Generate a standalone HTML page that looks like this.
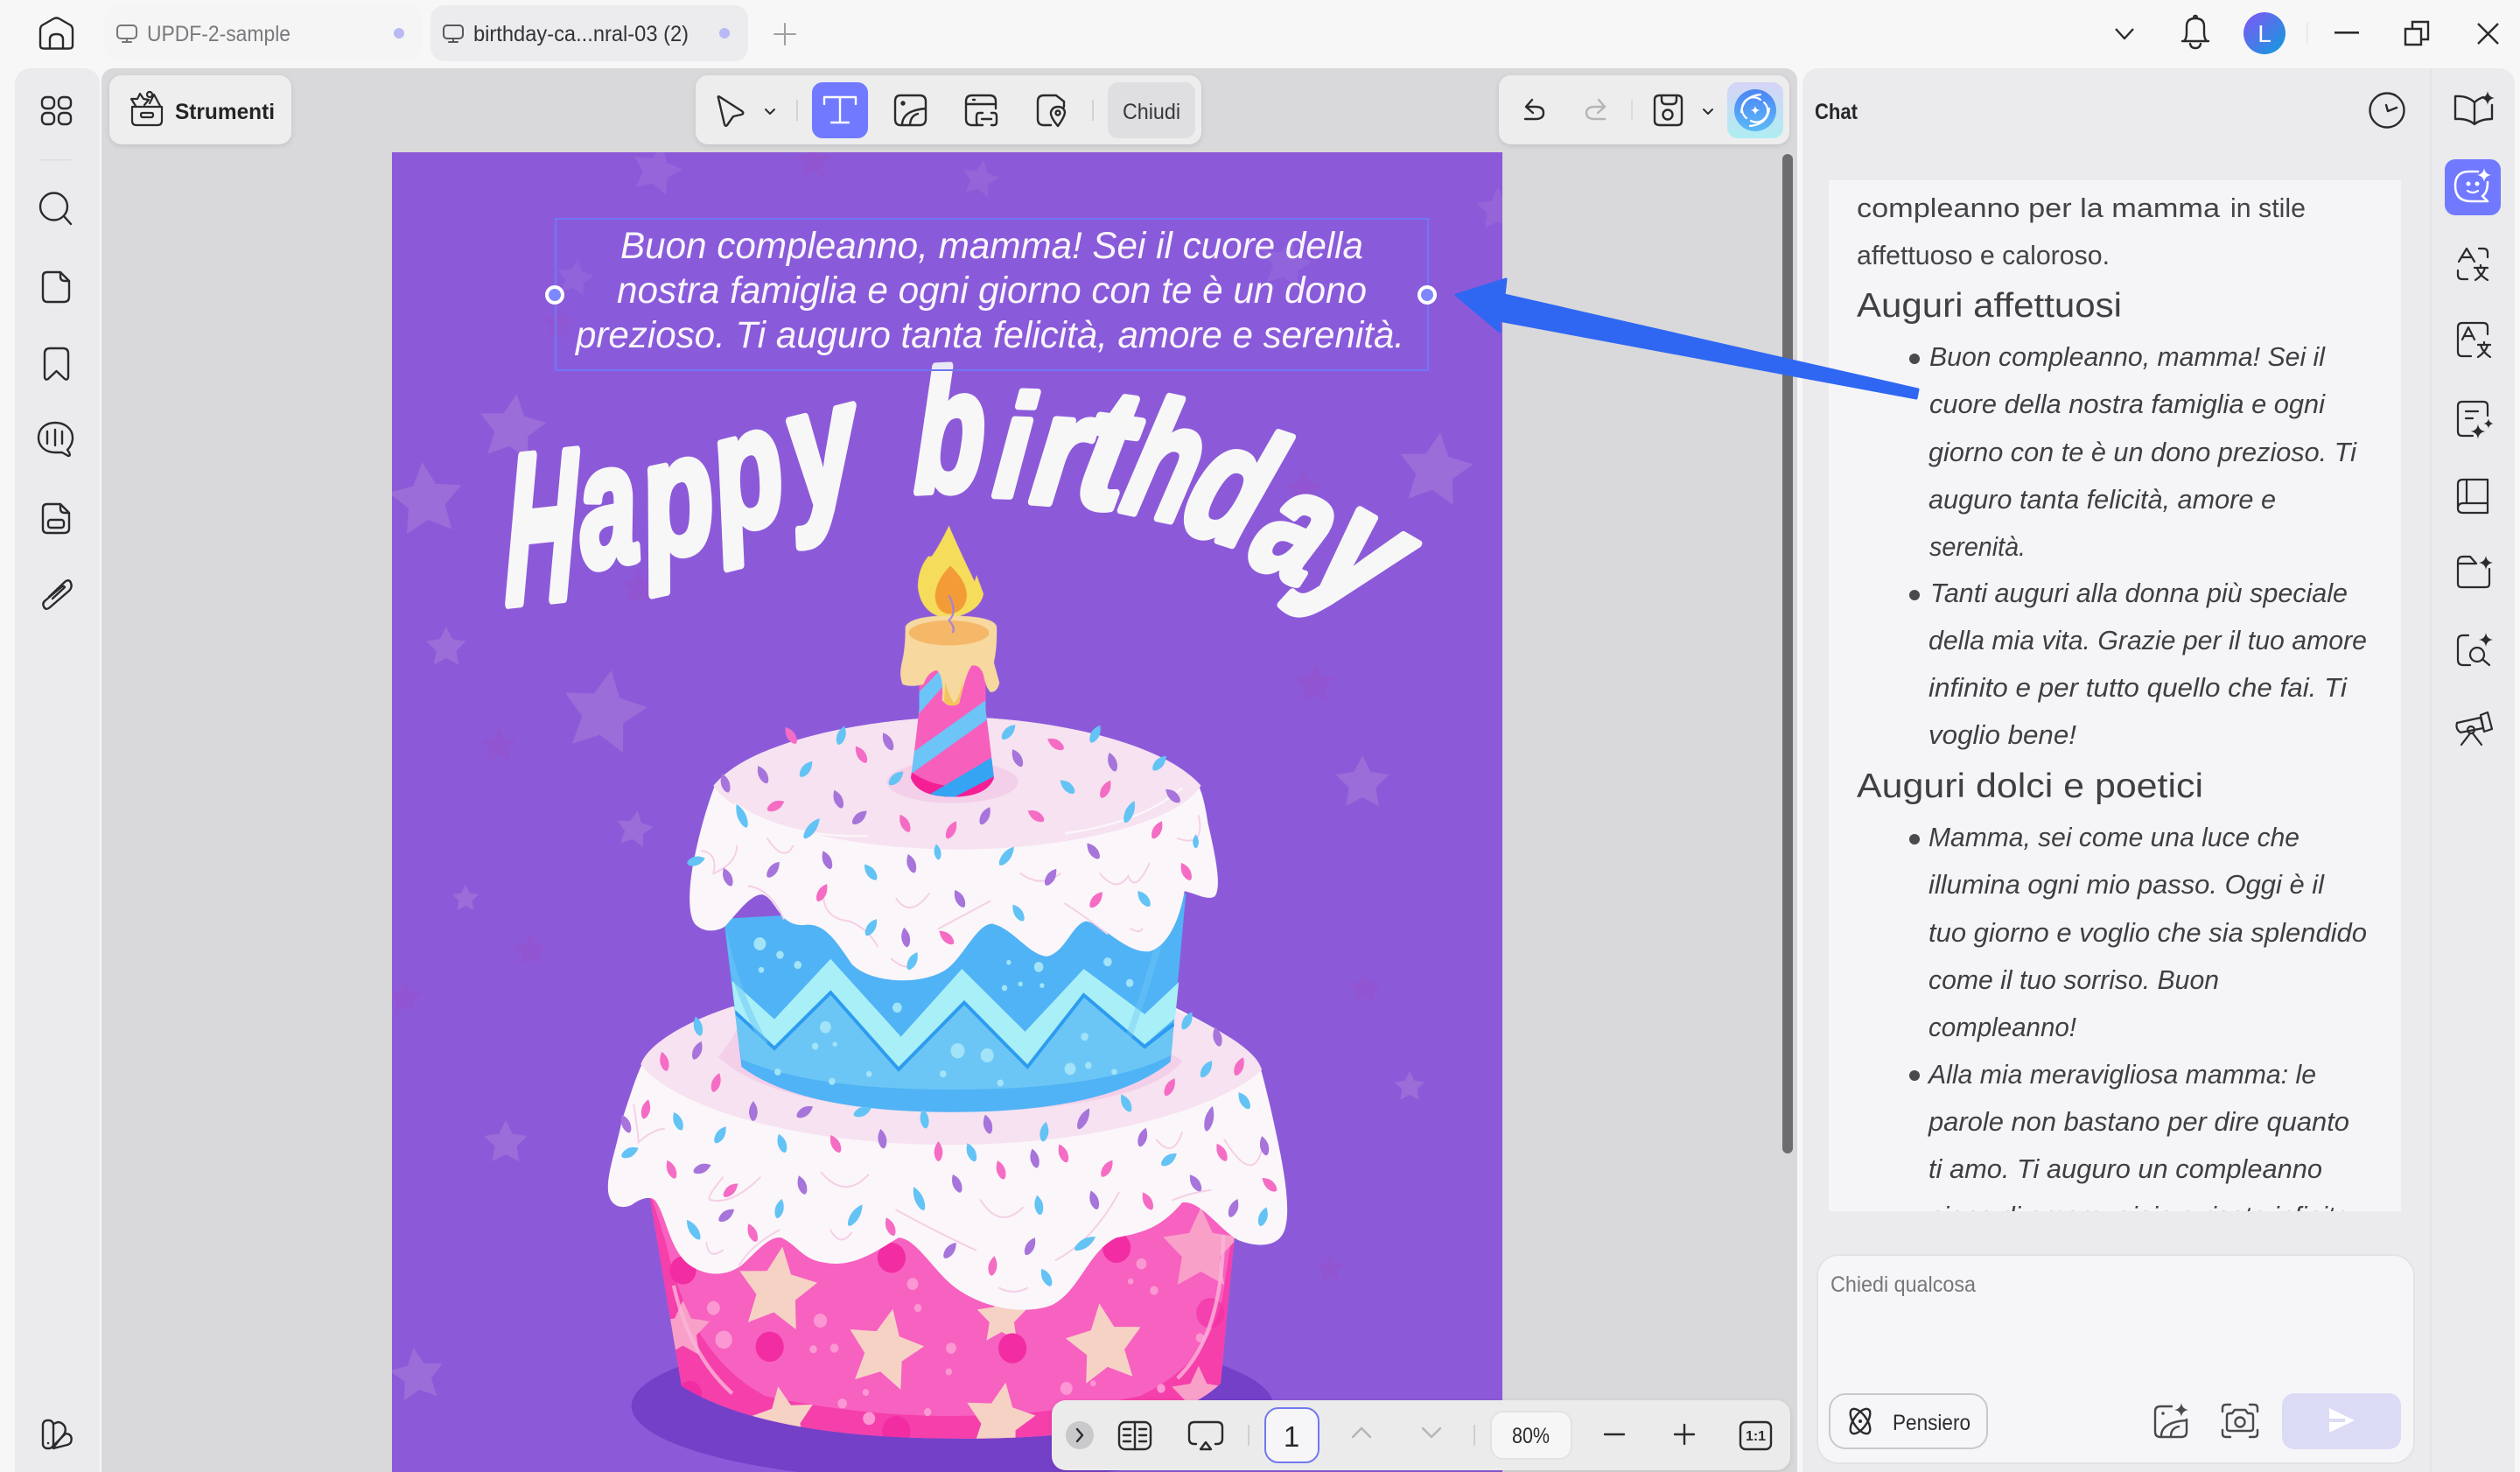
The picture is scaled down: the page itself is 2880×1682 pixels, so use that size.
<!DOCTYPE html>
<html lang="it"><head><meta charset="utf-8"><title>UPDF</title>
<style>
html,body{margin:0;padding:0;background:#f7f7f8;width:2880px;height:1682px;overflow:hidden}
svg{display:block}
text{font-family:"Liberation Sans",sans-serif}
.i{fill:none;stroke:#2b2b2d;stroke-width:2.4;stroke-linecap:round;stroke-linejoin:round}
.c{fill:#444347;font-size:31px}
.e{fill:#3f3e42;font-size:31px;font-style:italic}
.h{fill:#403f43;font-size:39px}
.l{fill:#f7f7f8;font:italic 700 100px "Liberation Sans",sans-serif;stroke:#f7f7f8;stroke-width:5;stroke-linejoin:round}
.m{fill:#faf5fb;font-size:43px;font-style:italic}
</style></head><body>
<svg xmlns="http://www.w3.org/2000/svg" width="2880" height="1682" viewBox="0 0 2880 1682">
<defs>
<polygon id="st" points="0,-1 .294,-.405 .951,-.309 .476,.155 .588,.809 0,.5 -.588,.809 -.476,.155 -.951,-.309 -.294,-.405"/>
<path id="sp" d="M0-8Q1-1 8 0Q1 1 0 8Q-1 1-8 0Q-1-1 0-8Z"/>
<path id="d" d="M0-20Q10-8 9 4Q7 18 0 20Q-7 18-9 4Q-10-8 0-20Z"/>
<clipPath id="pg"><rect x="448" y="174" width="1269" height="1508"/></clipPath>
<clipPath id="ct"><rect x="2090" y="206" width="654" height="1178"/></clipPath>
<clipPath id="tier"><path d="M150 1000L222 1400Q400 1505 820 1505Q1250 1505 1372 1395L1412 1000Z"/></clipPath>
<clipPath id="blue"><path d="M305 400L350 765Q480 855 800 855Q1130 855 1265 755L1305 400Z"/></clipPath>
<clipPath id="cand"><path d="M772 1000H868V1150Q876 1290 880 1370Q870 1430 820 1430Q770 1430 760 1370Q765 1290 772 1150Z"/></clipPath>
<linearGradient id="av" x1="0" y1="0" x2="1" y2="1"><stop offset="0" stop-color="#8455f5"/><stop offset="1" stop-color="#0c9edc"/></linearGradient>
<linearGradient id="ai" x1="0" y1="0" x2="0" y2="1"><stop offset="0" stop-color="#d6d4f6"/><stop offset="1" stop-color="#aeedf2"/></linearGradient>
<linearGradient id="aib" x1="0" y1="0" x2="0" y2="1"><stop offset="0" stop-color="#4d84f5"/><stop offset="1" stop-color="#5cb9f6"/></linearGradient>
<filter id="sh" x="-5%" y="-15%" width="110%" height="130%"><feDropShadow dx="0" dy="2" stdDeviation="3" flood-color="#000" flood-opacity=".1"/></filter>
</defs>

<rect width="2880" height="1682" fill="#f7f7f8"/>

<!-- Tabs -->
<rect x="120" y="5" width="362" height="65" rx="16" fill="#f5f5f6"/>
<rect x="492" y="6" width="363" height="64" rx="16" fill="#ecebed"/>
<path class="i" d="M46 52V34Q46 31 48 29L61 21.5Q64.5 19.5 68 21.5L81 29Q83 31 83 34V52Q83 55.5 79 55.5H50Q46 55.5 46 52ZM57 55V45Q57 39 64.5 39Q72 39 72 45V55"/>
<g class="i" style="stroke:#777779;stroke-width:2"><rect x="134" y="29" width="22" height="15" rx="4"/><path d="M145 44V48M140 48H150"/></g>
<text x="168" y="47" font-size="25" fill="#7a7a7d" textLength="164" lengthAdjust="spacingAndGlyphs">UPDF-2-sample</text>
<circle cx="456" cy="38" r="6" fill="#b9b9f5"/>
<g class="i" style="stroke:#58585a;stroke-width:2"><rect x="507" y="29" width="22" height="15" rx="4"/><path d="M518 44V48M513 48H523"/></g>
<text x="541" y="47" font-size="25" fill="#333335" textLength="246" lengthAdjust="spacingAndGlyphs">birthday-ca...nral-03 (2)</text>
<circle cx="828" cy="38" r="6" fill="#b9b9f5"/>
<path class="i" style="stroke:#a0a0a2;stroke-width:2" d="M897 27V51M885 39H909"/>

<!-- Title bar right -->
<path class="i" style="stroke-linecap:butt" d="M2418 33L2428 44L2438 33"/>
<path class="i" d="M2496 47Q2499 44 2499 38V30Q2499 21 2509 21Q2519 21 2519 30V38Q2519 44 2522 47ZM2494 47H2524M2503 50Q2504 55 2509 55Q2514 55 2515 50M2507 21Q2507 18 2509 18Q2511 18 2511 21"/>
<circle cx="2588" cy="38" r="24" fill="url(#av)"/>
<text x="2588" y="48" font-size="28" fill="#fff" text-anchor="middle">L</text>
<rect x="2636" y="26" width="1.5" height="24" fill="#e6e6e8"/>
<rect x="2668" y="36" width="28" height="2.6" fill="#2b2b2d"/>
<path class="i" style="stroke-linecap:butt;stroke-linejoin:miter" d="M2757 32V25H2775V45H2767M2749 33H2767V51H2749Z"/>
<path class="i" style="stroke-linecap:butt" d="M2832 27L2855 50M2855 27L2832 50"/>

<!-- Left rail -->
<rect x="17" y="78" width="97" height="1640" rx="18" fill="#ebebed"/>
<g class="i"><rect x="48" y="111" width="14" height="13" rx="5"/><rect x="67" y="111" width="14" height="13" rx="5"/><rect x="48" y="129" width="14" height="13" rx="5"/><rect x="67" y="129" width="14" height="13" rx="5"/></g>
<rect x="46" y="182" width="35" height="1.5" fill="#dcdcde"/>
<g class="i">
<circle cx="61.5" cy="236" r="15.5"/><path d="M73 247L81 256"/>
<path d="M69 311H54Q49 311 49 316V339Q49 345 54 345H73Q79 345 79 339V321ZM69 311V316Q69 321 74 321H79"/>
<path d="M51 431V404Q51 398 57 398H72Q78 398 78 404V431Q77 435 74 433L64.500 424L55 433Q52 435 51 431Z"/>
<path d="M63 483C52 483 44 490 44 500C44 510 52 517 63 517H71L78 521Q81 521 79 517L77 514C80 511 83 506 83 500C83 490 74 483 63 483ZM54 493V507M63 491V509M71 493V507"/>
<path d="M69 576H54Q49 576 49 581V604Q49 609 54 609H73Q79 609 79 604V586ZM69 576V581Q69 586 74 586H79"/><rect x="55" y="594" width="18" height="9" rx="3"/>
<path d="M56 682L74 665Q79 661 81 666Q83 671 79 675L57 694Q52 698 50 693Q48 689 52 686L71 670Q73 669 74 671L60 684"/>
<rect x="49" y="1623" width="12" height="32" rx="5"/><path d="M61 1627L66 1625Q71 1625 74 1630Q76 1635 73 1639L61 1654M63 1650L75 1638L79 1639Q83 1642 81 1648Q80 1650 77 1651L61 1655"/>
</g>
<circle cx="55" cy="1649" r="1.3" fill="#2b2b2d"/>

<!-- Canvas -->
<rect x="116" y="78" width="1938" height="1640" rx="14" fill="#d9d8da"/>

<!-- Page -->
<g clip-path="url(#pg)">
<rect x="448" y="174" width="1269" height="1508" fill="#8c5ad9"/>
<g fill="#9b6dd8">
<use href="#st" transform="translate(585 490) rotate(8) scale(40)"/><use href="#st" transform="translate(487 572) rotate(-6) scale(44)"/><use href="#st" transform="translate(510 740) scale(24)"/>
<use href="#st" transform="translate(690 815) rotate(10) scale(50)"/><use href="#st" transform="translate(1557 895) scale(32)"/><use href="#st" transform="translate(1640 538) rotate(8) scale(44)"/>
<use href="#st" transform="translate(725 948) rotate(10) scale(22)"/><use href="#st" transform="translate(532 1027) scale(16)"/><use href="#st" transform="translate(750 195) rotate(15) scale(30)" opacity=".6"/>
<use href="#st" transform="translate(1611 1242) scale(18)"/><use href="#st" transform="translate(578 1306) scale(26)"/><use href="#st" transform="translate(477 1572) rotate(-8) scale(32)"/>
<use href="#st" transform="translate(657 318) rotate(10) scale(22)" opacity=".5"/><use href="#st" transform="translate(1470 302) rotate(12) scale(30)" opacity=".5"/><use href="#st" transform="translate(1712 240) scale(26)" opacity=".5"/>
<use href="#st" transform="translate(1120 205) rotate(12) scale(22)" opacity=".5"/>
</g>
<g fill="#9653cd" opacity=".6">
<use href="#st" transform="translate(1503 782) scale(24)"/><use href="#st" transform="translate(570 852) scale(22)"/><use href="#st" transform="translate(730 672) scale(22)"/><use href="#st" transform="translate(606 1086) scale(20)"/>
<use href="#st" transform="translate(930 185) scale(22)"/><use href="#st" transform="translate(463 1140) scale(20)"/><use href="#st" transform="translate(1560 1130) scale(20)"/><use href="#st" transform="translate(1490 560) scale(22)"/><use href="#st" transform="translate(1520 1450) scale(18)"/><use href="#st" transform="translate(640 370) scale(20)"/>
</g>

<!-- Happy birthday (real text, per letter) -->
<text class="l" transform="translate(578 690) rotate(-6) skewX(-6) scale(1.12 2.4)">H</text>
<text class="l" transform="translate(668 650) rotate(-10) skewX(-4) scale(1.2 1.95)">a</text>
<text class="l" transform="translate(742 640) rotate(-12) skewX(-4) scale(1.35 1.9)">p</text>
<text class="l" transform="translate(826 610) rotate(-14) skewX(-4) scale(1.3 1.9)">p</text>
<text class="l" transform="translate(912 585) rotate(-14) skewX(-4) scale(1.4 1.95)">y</text>
<text class="l" transform="translate(1045 562) rotate(-3) skewX(-4) scale(1.3 1.95)">b</text>
<text class="l" transform="translate(1134 566) rotate(2) skewX(-4) scale(1.35 1.65)">i</text>
<text class="l" transform="translate(1176 573) rotate(4) skewX(-4) scale(1.5 1.8)">r</text>
<text class="l" transform="translate(1226 575) rotate(8) skewX(-4) scale(1.6 1.95)">t</text>
<text class="l" transform="translate(1278 582) rotate(12) skewX(-4) scale(1.25 1.9)">h</text>
<text class="l" transform="translate(1345 602) rotate(18) skewX(-4) scale(1.35 1.9)">d</text>
<text class="l" transform="translate(1422 640) rotate(25) skewX(-4) scale(1.3 1.8)">a</text>
<text class="l" transform="translate(1490 662) rotate(30) skewX(-4) scale(1.45 1.9)">y</text>

<!-- Selected text -->
<rect x="635" y="250" width="997" height="173" fill="#7a6cf0" fill-opacity=".1" stroke="#6f78f5" stroke-width="2"/>
<text class="m" x="709" y="295" textLength="849" lengthAdjust="spacingAndGlyphs">Buon compleanno, mamma! Sei il cuore della</text>
<text class="m" x="705" y="346" textLength="857" lengthAdjust="spacingAndGlyphs">nostra famiglia e ogni giorno con te è un dono</text>
<text class="m" x="658" y="397" textLength="947" lengthAdjust="spacingAndGlyphs">prezioso. Ti auguro tanta felicità, amore e serenità.</text>
<circle cx="634" cy="337" r="9" fill="#7d88ff" stroke="#fff" stroke-width="4"/>
<circle cx="1631" cy="337" r="9" fill="#7d88ff" stroke="#fff" stroke-width="4"/>

<!-- Cake: drawn in zoom coordinates -->
<g transform="translate(660 780) scale(.5357 .574)">
<ellipse cx="800" cy="1440" rx="685" ry="150" fill="#7540c8"/>
<path d="M150 1000L222 1400Q400 1505 820 1505Q1250 1505 1372 1395L1412 1000Z" fill="#f761c0"/>
<g clip-path="url(#tier)">
<path d="M150 1000L222 1400Q400 1505 820 1505Q1250 1505 1372 1395L1412 1000L1380 1200Q1360 1350 1200 1420Q800 1500 400 1420Q240 1340 190 1120Z" fill="#f53fab"/>
<g fill="#f6d2c5">
<use href="#st" transform="translate(425 1210) rotate(8) scale(88)"/><use href="#st" transform="translate(655 1330) rotate(12) scale(85)"/><use href="#st" transform="translate(1125 1320) rotate(-8) scale(85)"/><use href="#st" transform="translate(900 1470) rotate(10) scale(78)"/><use href="#st" transform="translate(440 1470) rotate(-10) scale(70)"/><use href="#st" transform="translate(905 1265) scale(55)"/><use href="#st" transform="translate(1330 1130) scale(85)" fill="#f9a0c9"/><use href="#st" transform="translate(225 1290) scale(60)" fill="#f9a0c9"/><use href="#st" transform="translate(1325 1420) scale(60)" fill="#f9a0c9"/>
</g>
<g fill="#f22ca3"><circle cx="410" cy="1322" r="30"/><circle cx="928" cy="1325" r="30"/><circle cx="670" cy="1145" r="30"/><circle cx="1150" cy="1125" r="30"/><circle cx="225" cy="1170" r="28"/><circle cx="680" cy="1490" r="30"/><circle cx="240" cy="1415" r="25"/><circle cx="1350" cy="1255" r="30" opacity=".6"/></g>
<g fill="#fb97d2"><circle cx="290" cy="1245" r="14"/><circle cx="312" cy="1308" r="18"/><circle cx="518" cy="1270" r="14"/><circle cx="503" cy="1327" r="8"/><circle cx="548" cy="1325" r="9"/><circle cx="715" cy="1197" r="12"/><circle cx="726" cy="1245" r="8"/><circle cx="797" cy="1325" r="11"/><circle cx="792" cy="1372" r="7"/><circle cx="1043" cy="1405" r="13"/><circle cx="1100" cy="1395" r="6"/><circle cx="1203" cy="1157" r="11"/><circle cx="1230" cy="1210" r="9"/><circle cx="1180" cy="1192" r="6"/><circle cx="1328" cy="1304" r="9"/><circle cx="622" cy="1465" r="13"/><circle cx="565" cy="1435" r="10"/><circle cx="747" cy="1452" r="8"/><circle cx="615" cy="1413" r="7"/><circle cx="1245" cy="1405" r="9"/></g>
<path d="M1378 1100Q1375 1300 1280 1385" fill="none" stroke="#fbb5d9" stroke-width="8" opacity=".8"/>
<path d="M205 1200Q240 1340 330 1415" fill="none" stroke="#fbb5d9" stroke-width="8" opacity=".8"/>
</g>
<!-- lower frosting -->
<path d="M330 645C240 675 170 710 145 745C125 780 110 830 95 870C85 920 65 970 65 1005C65 1040 90 1050 115 1040C130 1030 150 1020 165 1030C190 1060 195 1130 240 1160C280 1185 320 1180 350 1160C380 1135 410 1100 435 1105C470 1120 480 1150 530 1155C590 1165 640 1130 685 1105C720 1105 760 1170 800 1200C860 1245 950 1260 1010 1240C1070 1215 1090 1130 1150 1105C1200 1095 1240 1090 1290 1035C1330 1030 1370 1090 1410 1110C1450 1125 1500 1125 1510 1085C1520 1050 1510 990 1500 940C1485 870 1470 810 1455 760C1440 730 1370 690 1260 640Z" fill="#fbf6fa"/>
<path d="M135 760C150 720 230 675 330 645H1260C1370 690 1440 725 1460 770C1400 830 1150 920 800 920C450 920 200 840 135 760Z" fill="#f6e2f0"/>
<path d="M300 745Q350 690 345 660L1265 740Q1290 750 1290 755Q1200 850 800 855Q420 850 300 745Z" fill="#f4cfe9"/>
<!-- blue tier -->
<path d="M312 470L350 765Q480 855 800 855Q1130 855 1265 755L1298 420Z" fill="#50b3f5"/>
<g clip-path="url(#blue)">
<path d="M335 660L420 725L540 615L685 765L825 635L960 760L1080 620L1210 720L1270 680V740Q1130 810 800 810Q500 810 350 750Z" fill="#6bc6f6"/>
<path d="M325 590L420 670L540 550L690 705L820 570L955 695L1080 570L1210 660L1290 590L1285 660L1210 720L1080 620L960 760L825 635L685 765L540 615L420 725L335 660Z" fill="#a9eff7"/>
<path d="M335 655L420 728L540 617L685 770L825 637L960 765L1080 622L1210 725L1272 680" fill="none" stroke="#2d9bef" stroke-width="7"/>
<path d="M312 500Q340 620 400 720" fill="none" stroke="#70c8f6" stroke-width="14" opacity=".5"/>
<path d="M1240 520Q1210 620 1170 720" fill="none" stroke="#70c8f6" stroke-width="14" opacity=".4"/>
<g fill="#a2e3f8"><circle cx="389" cy="520" r="13"/><circle cx="432" cy="542" r="8"/><circle cx="392" cy="572" r="6"/><circle cx="470" cy="562" r="8"/><circle cx="529" cy="686" r="12"/><circle cx="507" cy="724" r="7"/><circle cx="549" cy="720" r="5"/><circle cx="682" cy="647" r="10"/><circle cx="920" cy="557" r="5"/><circle cx="984" cy="566" r="10"/><circle cx="945" cy="600" r="5"/><circle cx="911" cy="608" r="6"/><circle cx="991" cy="603" r="5"/><circle cx="1131" cy="556" r="9"/><circle cx="1178" cy="598" r="8"/><circle cx="1082" cy="705" r="8"/><circle cx="811" cy="733" r="15"/><circle cx="874" cy="742" r="14"/><circle cx="1051" cy="769" r="12"/><circle cx="1090" cy="762" r="7"/><circle cx="1145" cy="775" r="6"/><circle cx="427" cy="775" r="7"/><circle cx="543" cy="794" r="7"/><circle cx="622" cy="779" r="6"/><circle cx="780" cy="779" r="7"/><circle cx="902" cy="797" r="7"/></g>
</g>
<!-- upper frosting -->
<path d="M810 68C600 72 370 120 295 200C270 260 255 320 245 370C238 410 235 460 250 480C270 500 300 495 315 485C340 460 370 420 395 422C425 430 430 490 490 482C530 480 555 520 585 560C620 595 720 605 780 575C820 555 850 480 885 480C930 490 960 540 1000 545C1040 540 1055 480 1085 475C1120 480 1170 540 1220 535C1260 525 1285 470 1295 415C1320 420 1345 435 1360 425C1375 405 1360 340 1345 280C1340 250 1335 225 1325 205C1250 120 1020 72 810 68Z" fill="#fbf6fa"/>
<path d="M810 68C600 72 370 120 290 205C340 280 580 332 810 332C1050 332 1280 280 1330 205C1250 120 1020 72 810 68Z" fill="#f6e2f0"/>
<path d="M335 240Q440 310 620 305" fill="none" stroke="#fbf6fa" stroke-width="4"/>
<path d="M1290 210Q1200 280 1040 300" fill="none" stroke="#fbf6fa" stroke-width="4"/>
<ellipse cx="800" cy="198" rx="140" ry="42" fill="#f4cfe9"/>
<g fill="none" stroke="#f5cfe6" stroke-width="3.5" stroke-linecap="round">
<path d="M265 335Q300 340 290 380Q340 360 340 325M405 310Q440 360 460 325M365 405Q410 410 440 470M525 430Q530 470 580 475Q620 490 640 525M680 430Q710 470 750 420M945 380Q990 410 1030 380M1115 380Q1150 420 1175 385Q1190 420 1220 360M1040 440Q1090 470 1130 500M770 490Q810 470 880 435M1180 490Q1200 500 1205 490M1280 310Q1340 330 1325 265M670 550Q700 575 720 560"/>
<path d="M120 840Q130 900 130 915Q160 890 185 888M310 985Q270 1030 285 1030Q330 1040 390 985M520 975Q570 1030 620 980M860 1030Q900 1090 950 1045M680 1050Q780 1100 850 1130M1020 1150Q1100 1110 1155 1015M1235 910Q1270 950 1290 895M1380 910Q1440 1000 1460 930M540 1090Q560 1125 585 1095M430 1090Q370 1120 345 1160M275 1115Q280 1150 310 1130M900 1205Q930 1220 960 1205M1270 1030Q1310 1015 1350 1010"/>
</g>
<g fill="#f56cc4">
<use href="#d" transform="translate(455 105) rotate(-35)"/><use href="#d" transform="translate(605 143) rotate(-35)"/><use href="#d" transform="translate(423 245) rotate(65)"/><use href="#d" transform="translate(698 280) rotate(-30)"/><use href="#d" transform="translate(798 293) rotate(30)"/><use href="#d" transform="translate(978 265) rotate(-60)"/><use href="#d" transform="translate(1127 212) rotate(30)"/><use href="#d" transform="translate(1020 122) rotate(-60)"/><use href="#d" transform="translate(1237 293) rotate(30)"/><use href="#d" transform="translate(522 418) rotate(30)"/><use href="#d" transform="translate(1107 432) rotate(40)"/><use href="#d" transform="translate(1298 376) rotate(-30)"/><use href="#d" transform="translate(787 507) rotate(-50)"/>
<use href="#d" transform="translate(185 754) rotate(-15)"/><use href="#d" transform="translate(296 796) rotate(20)"/><use href="#d" transform="translate(146 849) rotate(15)"/><use href="#d" transform="translate(550 918) rotate(-30)"/><use href="#d" transform="translate(770 933)"/><use href="#d" transform="translate(903 970) rotate(-20)"/><use href="#d" transform="translate(1036 937) rotate(-25)"/><use href="#d" transform="translate(1130 967) rotate(35)"/><use href="#d" transform="translate(1264 805) rotate(30)"/><use href="#d" transform="translate(1412 764) rotate(25)"/><use href="#d" transform="translate(1374 935) rotate(-30)"/><use href="#d" transform="translate(200 969) rotate(-25)"/><use href="#d" transform="translate(327 1010) rotate(50)"/><use href="#d" transform="translate(1476 999) rotate(-50)"/><use href="#d" transform="translate(1216 1032) rotate(-30)"/><use href="#d" transform="translate(373 1095) rotate(-25)"/><use href="#d" transform="translate(667 1083) rotate(-25)"/><use href="#d" transform="translate(886 1161) rotate(10)"/>
</g>
<g fill="#63c3f5">
<use href="#d" transform="translate(563 105) rotate(20)"/><use href="#d" transform="translate(488 172) rotate(40)"/><use href="#d" transform="translate(350 265) rotate(-25) scale(1 1.3)"/><use href="#d" transform="translate(500 290) rotate(40) scale(1 1.3)"/><use href="#d" transform="translate(1178 257) rotate(25) scale(1 1.2)"/><use href="#d" transform="translate(1045 207) rotate(-50)"/><use href="#d" transform="translate(920 98) rotate(45)"/><use href="#d" transform="translate(1105 102) rotate(30)"/><use href="#d" transform="translate(1242 160) rotate(45)"/><use href="#d" transform="translate(680 190) rotate(50)"/><use href="#d" transform="translate(916 345) rotate(40) scale(1 1.2)"/><use href="#d" transform="translate(768 337) rotate(-10) scale(.8)"/><use href="#d" transform="translate(625 377) rotate(-40)"/><use href="#d" transform="translate(253 355) rotate(75)"/><use href="#d" transform="translate(1208 430) rotate(-40)"/><use href="#d" transform="translate(1319 316) scale(.7)"/><use href="#d" transform="translate(940 458) rotate(-35)"/><use href="#d" transform="translate(627 487) rotate(35)"/><use href="#d" transform="translate(715 554) rotate(30)"/>
<use href="#d" transform="translate(257 684) rotate(-15)"/><use href="#d" transform="translate(214 873) rotate(-25)"/><use href="#d" transform="translate(305 900) rotate(35)"/><use href="#d" transform="translate(112 935) rotate(65)"/><use href="#d" transform="translate(436 917) rotate(-20)"/><use href="#d" transform="translate(608 854) rotate(70)"/><use href="#d" transform="translate(740 868) rotate(-10)"/><use href="#d" transform="translate(840 935) rotate(-25)"/><use href="#d" transform="translate(996 894) rotate(10)"/><use href="#d" transform="translate(1170 837) rotate(-30)"/><use href="#d" transform="translate(1342 769) rotate(35)"/><use href="#d" transform="translate(1422 832) rotate(-35)"/><use href="#d" transform="translate(1301 673) rotate(30)"/><use href="#d" transform="translate(1262 949) rotate(55)"/><use href="#d" transform="translate(984 1040) rotate(-10)"/><use href="#d" transform="translate(728 1027) rotate(-25) scale(1 1.3)"/><use href="#d" transform="translate(593 1060) rotate(35) scale(1 1.3)"/><use href="#d" transform="translate(431 1047) rotate(15)"/><use href="#d" transform="translate(247 1089) rotate(-35) scale(1 1.2)"/><use href="#d" transform="translate(1463 1063) rotate(20)"/><use href="#d" transform="translate(1083 1116) rotate(60) scale(1 1.3)"/><use href="#d" transform="translate(1000 1184) rotate(-30)"/>
</g>
<g fill="#a674da">
<use href="#d" transform="translate(662 117) rotate(-30)"/><use href="#d" transform="translate(395 183) rotate(-30)"/><use href="#d" transform="translate(315 200) rotate(-20)"/><use href="#d" transform="translate(556 232) rotate(-25)"/><use href="#d" transform="translate(602 268) rotate(50)"/><use href="#d" transform="translate(870 265) rotate(30)"/><use href="#d" transform="translate(938 150) rotate(-30)"/><use href="#d" transform="translate(1141 158) rotate(-20)"/><use href="#d" transform="translate(1270 225) rotate(-50)"/><use href="#d" transform="translate(1100 335) rotate(-40)"/><use href="#d" transform="translate(712 360) rotate(-20)"/><use href="#d" transform="translate(532 353) rotate(-25)"/><use href="#d" transform="translate(418 372) rotate(40)"/><use href="#d" transform="translate(320 387) rotate(-25)"/><use href="#d" transform="translate(815 430) rotate(-30)"/><use href="#d" transform="translate(1010 387) rotate(35)"/><use href="#d" transform="translate(700 507) rotate(-10)"/>
<use href="#d" transform="translate(256 732) rotate(25)"/><use href="#d" transform="translate(103 878) rotate(-25)"/><use href="#d" transform="translate(375 853)"/><use href="#d" transform="translate(485 854) rotate(60)"/><use href="#d" transform="translate(875 879) rotate(-15)"/><use href="#d" transform="translate(650 908) rotate(-10)"/><use href="#d" transform="translate(975 947) rotate(-15)"/><use href="#d" transform="translate(1080 868) rotate(30) scale(1 1.2)"/><use href="#d" transform="translate(1365 705) rotate(-15)"/><use href="#d" transform="translate(1348 868) rotate(15) scale(1 1.3)"/><use href="#d" transform="translate(1206 905) rotate(20)"/><use href="#d" transform="translate(1465 922) rotate(-15)"/><use href="#d" transform="translate(266 967) rotate(70)"/><use href="#d" transform="translate(479 1000) rotate(-20)"/><use href="#d" transform="translate(809 997) rotate(-25)"/><use href="#d" transform="translate(1318 996) rotate(-35)"/><use href="#d" transform="translate(1102 1030) rotate(-20)"/><use href="#d" transform="translate(318 1060) rotate(55)"/><use href="#d" transform="translate(1400 1046) rotate(25)"/><use href="#d" transform="translate(966 1122) rotate(30)"/><use href="#d" transform="translate(795 1130) rotate(40)"/>
</g>
</g>
<!-- Candle & flame: zoom-6 coordinates -->
<g transform="translate(440 400) scale(.7908 .357)">
<path d="M772 1000H868V1150Q876 1290 880 1370Q870 1430 820 1430Q770 1430 760 1370Q765 1290 772 1150Z" fill="#f75fbd"/>
<g clip-path="url(#cand)">
<path d="M760 1350Q820 1440 880 1350V1440H760Z" fill="#f51f95"/>
<path d="M785 1425L880 1300V1365L815 1440Z" fill="#35a4f3"/>
<path d="M755 1300L875 1110V1175L755 1365Z" fill="#6cc4f7"/>
<path d="M765 1110L800 1030H825L765 1180Z" fill="#6cc4f7"/>
</g>
<path d="M815 562Q830 640 852 740L855 720L865 780Q860 840 815 860Q775 850 770 760Q770 700 785 660L790 660Q800 630 815 562Z" fill="#f5dd5b"/>
<path d="M817 690Q845 750 840 800Q835 840 815 845Q797 840 795 790Q795 740 817 690Z" fill="#f39b37"/>
<path d="M752 885Q760 850 815 850Q880 850 884 885Q885 950 880 1000L888 1065Q885 1095 875 1095Q868 1080 865 1040Q860 1005 848 1010Q840 1030 830 1130Q815 1150 805 1120Q808 1040 797 1025Q785 1030 778 1070Q760 1080 748 1070Q742 1040 748 990Q752 950 752 885Z" fill="#f7d9a0"/>
<ellipse cx="815" cy="905" rx="58" ry="40" fill="#f5b868"/>
<path d="M815 785Q828 840 815 865Q825 890 820 905" fill="none" stroke="#a683d6" stroke-width="3"/>
<path d="M810 1060Q813 1100 822 1130Q832 1110 835 1050Q835 1100 828 1135Q815 1145 808 1125Z" fill="#f4c45a"/>
</g>
</g>

<!-- Scrollbar -->
<rect x="2037" y="176" width="12" height="1142" rx="6" fill="#6d6c6f"/>

<!-- Strumenti -->
<g filter="url(#sh)"><rect x="125" y="86" width="208" height="79" rx="14" fill="#eeeeef"/></g>
<g class="i" style="stroke-width:2.2">
<path d="M151 122V138Q151 143 156 143H180Q185 143 185 138V122M151 122H185M163 129H173Q175 129 175 131Q175 134 173 134H163Q161 134 161 131Q161 129 163 129Z"/>
<path d="M155 121L150 113L157 113L160 107L164 113L170 114L165 120M171 118L176 108L183 121"/><circle cx="171" cy="108" r="3"/>
</g>
<text x="200" y="136" font-size="25" font-weight="700" fill="#242426" textLength="114" lengthAdjust="spacingAndGlyphs">Strumenti</text>

<!-- Center toolbar -->
<g filter="url(#sh)"><rect x="795" y="86" width="578" height="79" rx="14" fill="#ededee"/></g>
<path class="i" d="M821 112Q820 109 823 111L848 127Q851 130 847 131L838 133L831 143Q829 145 828 142Z"/>
<path class="i" style="stroke-width:2" d="M875 125L880 130L885 125"/>
<rect x="910" y="114" width="2" height="24" fill="#d3d3d5"/>
<rect x="928" y="94" width="64" height="64" rx="12" fill="#7079ff"/>
<path class="i" style="stroke:#fff" d="M942 119V111H978V119M960 111V140M950 140H970"/>
<rect x="1266" y="94" width="100" height="64" rx="12" fill="#dfdee1"/>
<text x="1283" y="136" font-size="25" fill="#38383a" textLength="66" lengthAdjust="spacingAndGlyphs">Chiudi</text>
<g class="i">
<path d="M1029 109H1051Q1058 109 1058 116V136Q1058 143 1051 143H1029Q1023 143 1023 136V116Q1023 109 1029 109ZM1031 142Q1032 126 1058 124M1040 142Q1041 132 1049 130"/><circle cx="1032" cy="118" r="1.5" fill="#2b2b2d"/>
<path d="M1119 143H1111Q1104 143 1104 136V116Q1104 109 1111 109H1131Q1138 109 1138 116V124M1104 119H1138M1112 114H1114M1123 129H1119Q1116 129 1116 133V139Q1116 143 1119 143H1123M1133 129H1136Q1139 129 1139 133V139Q1139 143 1136 143H1133M1122 136H1133"/>
<path d="M1201 143H1193Q1186 143 1186 136V116Q1186 109 1193 109H1207L1216 116V122"/><path d="M1209 144Q1200 133 1201 128Q1203 122 1209 122Q1216 122 1217 128Q1217 133 1209 144Z"/><circle cx="1209" cy="129" r="2.5"/>
</g>
<rect x="1248" y="114" width="2" height="24" fill="#d3d3d5"/>

<!-- Right toolbar -->
<g filter="url(#sh)"><rect x="1713" y="86" width="332" height="79" rx="14" fill="#ededee"/></g>
<path class="i" d="M1751 114L1744 122L1752 129M1745 122H1755Q1764 122 1764 129Q1764 136 1755 136H1743"/>
<path class="i" style="stroke:#b5b5b7" d="M1827 114L1834 122L1826 129M1833 122H1823Q1813 122 1813 129Q1813 136 1823 136H1834"/>
<rect x="1864" y="114" width="2" height="24" fill="#dcdcde"/>
<path class="i" d="M1897 109H1917Q1922 109 1922 114V138Q1922 143 1917 143H1897Q1891 143 1891 138V114Q1891 109 1897 109ZM1899 109V114Q1899 119 1904 119H1911Q1916 119 1916 114V109"/><circle class="i" cx="1906" cy="131" r="5.500"/>
<path class="i" style="stroke-width:2" d="M1947 125L1952 130L1957 125"/>
<rect x="1974" y="94" width="64" height="64" rx="12" fill="url(#ai)"/>
<circle cx="2006" cy="126" r="24" fill="url(#aib)"/>
<g fill="none" stroke="#fff" stroke-width="2.2" stroke-linecap="round"><path d="M1996 135A13 13 0 0 1 2012 114"/><path d="M2016 117A13 13 0 0 1 2001 138"/><path d="M1990 128Q1992 110 2012 108"/><path d="M2022 124Q2020 142 2000 144"/></g>
<use href="#sp" transform="translate(2006 126) scale(.65)" fill="#fff"/>

<!-- Chat panel -->
<rect x="2060" y="78" width="814" height="1640" rx="18" fill="#ebeaed"/>
<rect x="2777" y="78" width="2" height="1604" fill="#e3e2e5"/>
<text x="2074" y="136" font-size="25" font-weight="700" fill="#272729" textLength="49" lengthAdjust="spacingAndGlyphs">Chat</text>
<g class="i"><circle cx="2728" cy="126" r="19.500"/><path d="M2727 120L2729 127L2739 123"/></g>
<g class="i"><path d="M2828 117Q2820 109 2806 110V136Q2820 135 2828 142Q2835 136 2848 136V120M2828 117V142M2828 117Q2832 113 2838 111"/></g>
<use href="#sp" transform="translate(2843 112)" fill="#2b2b2d"/>

<!-- Chat sidebar -->
<rect x="2794" y="182" width="64" height="64" rx="12" fill="#7079ff"/>
<path class="i" style="stroke:#fff;stroke-width:2.6" d="M2832 196H2822Q2806 196 2806 212Q2806 230 2824 230H2843L2837 224Q2843 220 2843 208"/>
<circle cx="2821" cy="210" r="2.500" fill="#fff"/><circle cx="2831" cy="210" r="2.500" fill="#fff"/>
<path class="i" style="stroke:#fff;stroke-width:2.200" d="M2820 218Q2826 222 2832 218"/>
<use href="#sp" transform="translate(2839 200)" fill="#fff"/>
<g class="i" style="stroke-width:2.200">
<path d="M2810 299L2819 284L2828 299M2813 294H2825M2833 284H2838Q2843 284 2843 289V294M2809 309V314Q2809 319 2814 319H2820M2828 306H2843M2835 303V306M2840 306Q2838 314 2829 320M2831 306Q2833 314 2843 320"/>
<path d="M2832 369H2814Q2809 369 2809 374V402Q2809 407 2814 407H2824M2832 369H2838Q2843 369 2843 374V382M2814 388L2821 374L2828 388M2816 384H2826M2832 394H2846M2839 391V394M2843 394Q2841 402 2832 408M2835 394Q2837 402 2846 408"/>
<path d="M2826 498H2814Q2809 498 2809 493V464Q2809 459 2814 459H2838Q2843 459 2843 464V475M2818 470H2832M2818 478H2826"/>
<path d="M2815 548H2843V586H2815Q2809 586 2809 581V553Q2809 548 2815 548ZM2819 548V575M2809 581Q2809 575 2815 575H2842"/>
<path d="M2809 642V667Q2809 671 2813 671H2841Q2845 671 2845 667V650M2809 642Q2809 636 2815 636H2823L2830 644H2809"/>
<path d="M2821 726H2815Q2809 726 2809 732V754Q2809 760 2815 760H2823"/><circle cx="2831" cy="748" r="8"/><path d="M2838 754L2845 760"/>
<path d="M2808 826L2835 820L2838 832L2812 837Q2806 833 2808 826ZM2835 817L2843 814L2848 833L2839 836ZM2823 838L2813 851M2826 838L2836 851"/><circle cx="2824" cy="834" r="4"/>
</g>
<use href="#sp" transform="translate(2832 493) scale(1.05)" fill="#2b2b2d"/><use href="#sp" transform="translate(2844 484) scale(.7)" fill="#2b2b2d"/>
<use href="#sp" transform="translate(2841 643)" fill="#2b2b2d"/><use href="#sp" transform="translate(2841 731)" fill="#2b2b2d"/>

<!-- Chat content -->
<rect x="2090" y="206" width="654" height="1178" fill="#f5f5f8"/>
<g clip-path="url(#ct)">
<text class="c" x="2122" y="248" textLength="415" lengthAdjust="spacingAndGlyphs">compleanno per la mamma</text>
<text class="c" x="2549" y="248" textLength="86" lengthAdjust="spacingAndGlyphs">in stile</text>
<text class="c" x="2122" y="302" textLength="289" lengthAdjust="spacingAndGlyphs">affettuoso e caloroso.</text>
<text class="h" x="2122" y="362" textLength="303" lengthAdjust="spacingAndGlyphs">Auguri affettuosi</text>
<text class="h" x="2122" y="911" textLength="396" lengthAdjust="spacingAndGlyphs">Auguri dolci e poetici</text>
<g fill="#4a494d"><circle cx="2188" cy="410" r="6"/><circle cx="2188" cy="680" r="6"/><circle cx="2188" cy="959" r="6"/><circle cx="2188" cy="1229" r="6"/></g>
<text class="e" x="2205" y="418" textLength="452" lengthAdjust="spacingAndGlyphs">Buon compleanno, mamma! Sei il</text>
<text class="e" x="2205" y="472" textLength="452" lengthAdjust="spacingAndGlyphs">cuore della nostra famiglia e ogni</text>
<text class="e" x="2204" y="527" textLength="489" lengthAdjust="spacingAndGlyphs">giorno con te è un dono prezioso. Ti</text>
<text class="e" x="2204" y="581" textLength="397" lengthAdjust="spacingAndGlyphs">auguro tanta felicità, amore e</text>
<text class="e" x="2205" y="635" textLength="110" lengthAdjust="spacingAndGlyphs">serenità.</text>
<text class="e" x="2206" y="688" textLength="477" lengthAdjust="spacingAndGlyphs">Tanti auguri alla donna più speciale</text>
<text class="e" x="2204" y="742" textLength="501" lengthAdjust="spacingAndGlyphs">della mia vita. Grazie per il tuo amore</text>
<text class="e" x="2204" y="796" textLength="478" lengthAdjust="spacingAndGlyphs">infinito e per tutto quello che fai. Ti</text>
<text class="e" x="2204" y="850" textLength="169" lengthAdjust="spacingAndGlyphs">voglio bene!</text>
<text class="e" x="2204" y="967" textLength="424" lengthAdjust="spacingAndGlyphs">Mamma, sei come una luce che</text>
<text class="e" x="2204" y="1021" textLength="452" lengthAdjust="spacingAndGlyphs">illumina ogni mio passo. Oggi è il</text>
<text class="e" x="2204" y="1076" textLength="501" lengthAdjust="spacingAndGlyphs">tuo giorno e voglio che sia splendido</text>
<text class="e" x="2204" y="1130" textLength="332" lengthAdjust="spacingAndGlyphs">come il tuo sorriso. Buon</text>
<text class="e" x="2204" y="1184" textLength="169" lengthAdjust="spacingAndGlyphs">compleanno!</text>
<text class="e" x="2204" y="1238" textLength="443" lengthAdjust="spacingAndGlyphs">Alla mia meravigliosa mamma: le</text>
<text class="e" x="2204" y="1292" textLength="481" lengthAdjust="spacingAndGlyphs">parole non bastano per dire quanto</text>
<text class="e" x="2204" y="1346" textLength="450" lengthAdjust="spacingAndGlyphs">ti amo. Ti auguro un compleanno</text>
<text class="e" x="2204" y="1400" textLength="481" lengthAdjust="spacingAndGlyphs">pieno di amore, gioia e risate infinite</text>
</g>

<!-- Arrow -->
<path d="M1664 337L1721 319L1719 337L2192 445L2190 455L1713 366L1714 379Z" fill="#2f67f2" stroke="#2f67f2" stroke-width="3" stroke-linejoin="round"/>

<!-- Input -->
<rect x="2077" y="1434" width="682" height="238" rx="24" fill="#f6f6f8" stroke="#e3e3e5" stroke-width="2"/>
<text x="2092" y="1476" font-size="25" fill="#77777a" textLength="166" lengthAdjust="spacingAndGlyphs">Chiedi qualcosa</text>
<rect x="2091" y="1593" width="180" height="62" rx="18" fill="#f6f6f8" stroke="#c9c9cb" stroke-width="2"/>
<g class="i"><ellipse cx="2126" cy="1624" rx="7.500" ry="16.500" transform="rotate(35 2126 1624)"/><ellipse cx="2126" cy="1624" rx="7.500" ry="16.500" transform="rotate(-35 2126 1624)"/></g>
<circle cx="2126" cy="1624" r="2" fill="#2b2b2d"/>
<text x="2163" y="1634" font-size="25" fill="#2c2c2e" textLength="89" lengthAdjust="spacingAndGlyphs">Pensiero</text>
<g class="i" style="stroke:#4a4a4d">
<path d="M2482 1607H2469Q2463 1607 2463 1613V1636Q2463 1642 2469 1642H2493Q2499 1642 2499 1636V1622M2470 1641Q2470 1625 2499 1623M2481 1641Q2481 1632 2490 1630"/>
<path d="M2540 1613V1609Q2540 1605 2544 1605H2549M2571 1605H2576Q2580 1605 2580 1609V1613M2540 1634V1638Q2540 1642 2544 1642H2549M2571 1642H2576Q2580 1642 2580 1638V1634M2551 1615L2554 1611H2566L2569 1615H2572Q2575 1615 2575 1618V1632Q2575 1635 2572 1635H2548Q2545 1635 2545 1632V1618Q2545 1615 2548 1615Z"/><circle cx="2560" cy="1625" r="5.500"/>
</g>
<circle cx="2472" cy="1615" r="1.800" fill="#4a4a4d"/><use href="#sp" transform="translate(2493 1611)" fill="#4a4a4d"/>
<rect x="2608" y="1592" width="136" height="64" rx="14" fill="#dbdbf6"/>
<path d="M2662 1609L2691 1623L2662 1637V1625H2680V1621H2662Z" fill="#fff"/>

<!-- Bottom toolbar -->
<g filter="url(#sh)"><rect x="1202" y="1600" width="844" height="80" rx="16" fill="#ebebec"/></g>
<circle cx="1234" cy="1640" r="16" fill="#c9c8ca"/>
<path class="i" d="M1231 1633L1237 1640L1231 1647"/>
<g class="i">
<rect x="1279" y="1625" width="36" height="31" rx="7"/><path d="M1297 1625V1656M1284 1633H1292M1284 1640H1292M1284 1647H1292M1302 1633H1310M1302 1640H1310M1302 1647H1310"/>
<path d="M1367 1650H1365Q1359 1650 1359 1644V1631Q1359 1625 1365 1625H1391Q1397 1625 1397 1631V1644Q1397 1650 1391 1650H1389M1378 1648L1384 1656H1372Z"/>
</g>
<rect x="1426" y="1628" width="2" height="24" fill="#cfcfd1"/>
<rect x="1446" y="1609" width="61" height="62" rx="15" fill="#f6f6f8" stroke="#7079ee" stroke-width="2"/>
<text x="1476" y="1653" font-size="33" fill="#2a2a2c" text-anchor="middle">1</text>
<path class="i" style="stroke:#b5b5b7" d="M1546 1642L1556 1632L1566 1642"/>
<path class="i" style="stroke:#b5b5b7" d="M1626 1632L1636 1642L1646 1632"/>
<rect x="1684" y="1628" width="2" height="24" fill="#cfcfd1"/>
<rect x="1704" y="1613" width="92" height="54" rx="14" fill="#f6f6f7" stroke="#e2e2e4" stroke-width="2"/>
<text x="1728" y="1649" font-size="25" fill="#2a2a2c" textLength="43" lengthAdjust="spacingAndGlyphs">80%</text>
<path class="i" d="M1834 1639H1856M1914 1639H1936M1925 1628V1650"/>
<rect x="1989" y="1625" width="35" height="31" rx="6" class="i"/>
<text x="2006.500" y="1646" font-size="16" font-weight="700" fill="#2a2a2c" text-anchor="middle">1:1</text>
</svg>
</body></html>
